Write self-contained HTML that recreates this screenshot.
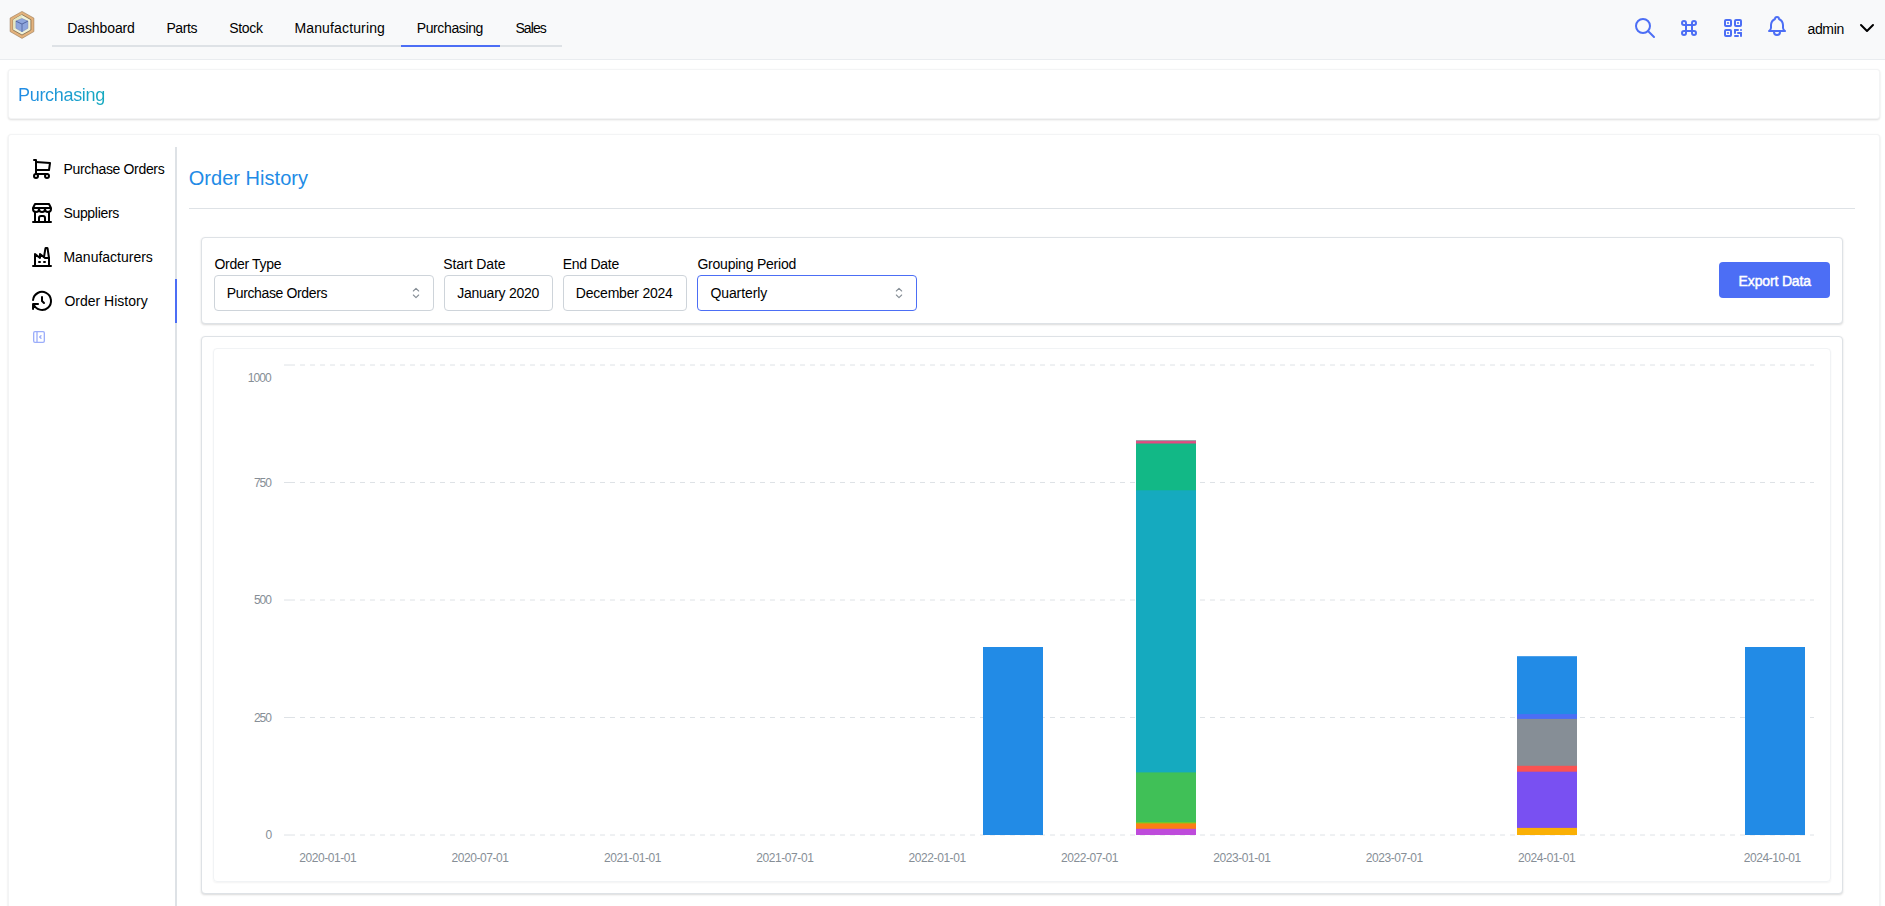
<!DOCTYPE html>
<html><head><meta charset="utf-8"><title>Purchasing</title>
<style>
*{box-sizing:border-box;margin:0;padding:0}
html,body{width:1885px;height:906px;overflow:hidden;background:#fff;font-family:"Liberation Sans",sans-serif;color:#000}
.a{position:absolute}
.t{position:absolute;line-height:1;white-space:nowrap}
svg.i{position:absolute;fill:none;stroke-linecap:round;stroke-linejoin:round}
.paper{position:absolute;background:#fff;border-radius:4px;box-shadow:0 1px 3px rgba(0,0,0,.05),0 1px 2px rgba(0,0,0,.1)}
.pp{position:absolute;background:#fff;border-radius:3px;border:1px solid #f3f4f5;box-shadow:0 1px 3px rgba(0,0,0,.05),0 1px 2px rgba(0,0,0,.09)}
.inp{position:absolute;border:1px solid #ced4da;border-radius:4px;background:#fff;height:36px;top:275px}
.yl{position:absolute;font-size:12px;line-height:1;color:#868e96;white-space:nowrap}
.xl{position:absolute;font-size:12px;line-height:1;color:#868e96;white-space:nowrap;top:852px;letter-spacing:-0.43px}
.bar{position:absolute;width:60px}
</style></head>
<body>
<div class="a" style="left:0;top:0;width:1885px;height:60px;background:#f8f9fa;border-bottom:1px solid #e9ecef"></div>
<svg class="a" style="left:6px;top:8px" width="32" height="34" viewBox="6 8 32 34">
  <polygon points="22,11.4 33.9,18.1 33.9,31.6 22,38.4 10.1,31.6 10.1,18.1" fill="#e3b27c" stroke="#8a6a44" stroke-width="0.5"/>
  <polygon points="22,14.6 30.9,19.7 30.9,30 22,35 13.1,30 13.1,19.7" fill="#f1f2d8" stroke="#6e5a3c" stroke-width="0.7"/>
  <polygon points="22,14.6 13.1,19.7 13.1,30 15.9,28.3 15.9,21.1 22,18.5" fill="#e4e7c4"/>
  <polygon points="22,18.5 27.9,21.1 27.9,28.3 22,31.8 15.9,28.3 15.9,21.1" fill="#8ea6dd" stroke="#6a7fb8" stroke-width="0.5"/>
  <polyline points="15.9,21.1 22,24.1 27.9,21.1" stroke="#4a5c98" stroke-width="0.9" fill="none"/>
  <line x1="22" y1="24.1" x2="22" y2="31.8" stroke="#5a6fa8" stroke-width="1"/>
</svg>
<div class="a" style="left:52px;top:45px;width:510px;height:2px;background:#dee2e6"></div>
<div class="a" style="left:401px;top:45px;width:99px;height:2px;background:#4c6ef5"></div>
<span class="t" style="left:67.3px;top:21px;font-size:14px;letter-spacing:-0.11px">Dashboard</span>
<span class="t" style="left:166.4px;top:21px;font-size:14px;letter-spacing:-0.4px">Parts</span>
<span class="t" style="left:229.2px;top:21px;font-size:14px;letter-spacing:-0.33px">Stock</span>
<span class="t" style="left:294.4px;top:21px;font-size:14px;letter-spacing:0.15px">Manufacturing</span>
<span class="t" style="left:416.7px;top:21px;font-size:14px;letter-spacing:-0.37px">Purchasing</span>
<span class="t" style="left:515.4px;top:21px;font-size:14px;letter-spacing:-0.9px">Sales</span>
<svg class="i" style="left:1633px;top:16px" width="24" height="24" viewBox="0 0 24 24" stroke="#4c6ef5" stroke-width="2"><path d="M10 10m-7 0a7 7 0 1 0 14 0a7 7 0 1 0 -14 0"/><path d="M21 21l-6 -6"/></svg>
<svg class="i" style="left:1677px;top:16px" width="24" height="24" viewBox="0 0 24 24" stroke="#4c6ef5" stroke-width="2"><path d="M7 9a2 2 0 1 1 2 -2v10a2 2 0 1 1 -2 -2h10a2 2 0 1 1 -2 2v-10a2 2 0 1 1 2 2h-10"/></svg>
<svg class="i" style="left:1721px;top:16px" width="24" height="24" viewBox="0 0 24 24" stroke="#4c6ef5" stroke-width="2"><path d="M4 4m0 1a1 1 0 0 1 1 -1h4a1 1 0 0 1 1 1v4a1 1 0 0 1 -1 1h-4a1 1 0 0 1 -1 -1z"/><path d="M7 17l0 .01"/><path d="M14 4m0 1a1 1 0 0 1 1 -1h4a1 1 0 0 1 1 1v4a1 1 0 0 1 -1 1h-4a1 1 0 0 1 -1 -1z"/><path d="M7 7l0 .01"/><path d="M4 14m0 1a1 1 0 0 1 1 -1h4a1 1 0 0 1 1 1v4a1 1 0 0 1 -1 1h-4a1 1 0 0 1 -1 -1z"/><path d="M17 7l0 .01"/><path d="M14 14l3 0"/><path d="M20 14l0 .01"/><path d="M14 14l0 3"/><path d="M14 20l3 0"/><path d="M17 17l3 0"/><path d="M20 17l0 3"/></svg>
<svg class="i" style="left:1765px;top:14px" width="24" height="24" viewBox="0 0 24 24" stroke="#4c6ef5" stroke-width="2"><path d="M10 5a2 2 0 1 1 4 0a7 7 0 0 1 4 6v3a4 4 0 0 0 2 3h-16a4 4 0 0 0 2 -3v-3a7 7 0 0 1 4 -6"/><path d="M9 17v1a3 3 0 0 0 6 0v-1"/></svg>
<span class="t" style="left:1807.4px;top:22px;font-size:14px;letter-spacing:-0.3px">admin</span>
<svg class="i" style="left:1855px;top:16px" width="24" height="24" viewBox="0 0 24 24" stroke="#000" stroke-width="2"><path d="M6 9l6 6l6 -6"/></svg>
<div class="pp" style="left:8px;top:69px;width:1872px;height:50px"></div>
<span class="t" style="left:18px;top:86px;font-size:18px;letter-spacing:-0.31px;background:linear-gradient(90deg,#228be6,#15aabf);-webkit-background-clip:text;background-clip:text;color:transparent;padding-bottom:4px">Purchasing</span>
<div class="pp" style="left:8px;top:134px;width:1872px;height:800px"></div>
<div class="a" style="left:175px;top:147px;width:2px;height:760px;background:#dee2e6"></div>
<div class="a" style="left:175px;top:279px;width:2px;height:44px;background:#4c6ef5"></div>
<svg class="i" style="left:30px;top:157px" width="24" height="24" viewBox="0 0 24 24" stroke="#000" stroke-width="2"><path d="M6 19m-2 0a2 2 0 1 0 4 0a2 2 0 1 0 -4 0"/><path d="M17 19m-2 0a2 2 0 1 0 4 0a2 2 0 1 0 -4 0"/><path d="M17 17h-11v-14h-2"/><path d="M6 5l14 1l-1 7h-13"/></svg>
<span class="t" style="left:63.6px;top:162px;font-size:14px;letter-spacing:-0.34px">Purchase Orders</span>
<svg class="i" style="left:30px;top:201px" width="24" height="24" viewBox="0 0 24 24" stroke="#000" stroke-width="2"><path d="M3 21l18 0"/><path d="M3 7v1a3 3 0 0 0 6 0v-1m0 1a3 3 0 0 0 6 0v-1m0 1a3 3 0 0 0 6 0v-1h-18l2 -4h14l2 4"/><path d="M5 21l0 -10.15"/><path d="M19 21l0 -10.15"/><path d="M9 21v-4a2 2 0 0 1 2 -2h2a2 2 0 0 1 2 2v4"/></svg>
<span class="t" style="left:63.4px;top:206px;font-size:14px;letter-spacing:-0.31px">Suppliers</span>
<svg class="i" style="left:30px;top:245px" width="24" height="24" viewBox="0 0 24 24" stroke="#000" stroke-width="2"><path d="M3 21h18"/><path d="M5 21v-12l5 4v-4l5 4h4"/><path d="M19 21v-8l-1.436 -9.574a.5 .5 0 0 0 -.495 -.426h-1.145a.5 .5 0 0 0 -.494 .418l-1.43 8.582"/><path d="M9 17h1"/><path d="M14 17h1"/></svg>
<span class="t" style="left:63.4px;top:250px;font-size:14px">Manufacturers</span>
<svg class="i" style="left:30px;top:289px" width="24" height="24" viewBox="0 0 24 24" stroke="#000" stroke-width="2"><path d="M12 8l0 4l2 2"/><path d="M3.05 11a9 9 0 1 1 .5 4m-.5 5v-5h5"/></svg>
<span class="t" style="left:64.4px;top:294px;font-size:14px">Order History</span>
<svg class="i" style="left:31px;top:329px" width="16" height="16" viewBox="0 0 24 24" stroke="#9caefa" stroke-width="2"><path d="M4 4m0 2a2 2 0 0 1 2 -2h12a2 2 0 0 1 2 2v12a2 2 0 0 1 -2 2h-12a2 2 0 0 1 -2 -2z"/><path d="M9 4v16"/><path d="M15 10l-2 2l2 2"/></svg>
<span class="t" style="left:188.7px;top:167.5px;font-size:20px;letter-spacing:0.04px;color:#228be6">Order History</span>
<div class="a" style="left:189px;top:208px;width:1666px;height:1px;background:#dee2e6"></div>
<div class="paper" style="left:201px;top:237px;width:1642px;height:87px;border:1px solid #dee2e6"></div>
<span class="t" style="left:214.5px;top:257px;font-size:14px;letter-spacing:-0.31px">Order Type</span>
<span class="t" style="left:443.3px;top:257px;font-size:14px;letter-spacing:-0.08px">Start Date</span>
<span class="t" style="left:562.7px;top:257px;font-size:14px;letter-spacing:-0.27px">End Date</span>
<span class="t" style="left:697.4px;top:257px;font-size:14px;letter-spacing:-0.22px">Grouping Period</span>
<div class="inp" style="left:214px;width:220px"></div>
<div class="inp" style="left:444px;width:109px"></div>
<div class="inp" style="left:563px;width:124px"></div>
<div class="inp" style="left:697px;width:220px;border-color:#4c6ef5"></div>
<span class="t" style="left:226.8px;top:286px;font-size:14px;letter-spacing:-0.37px">Purchase Orders</span>
<span class="t" style="left:457.2px;top:286px;font-size:14px;letter-spacing:-0.24px">January 2020</span>
<span class="t" style="left:575.8px;top:286px;font-size:14px;letter-spacing:-0.21px">December 2024</span>
<span class="t" style="left:710.4px;top:286px;font-size:14px;letter-spacing:-0.09px">Quarterly</span>
<svg class="i" style="left:408px;top:285px" width="16" height="16" viewBox="0 0 24 24" stroke="#868e96" stroke-width="1.6"><path d="M8 9l4 -4l4 4"/><path d="M16 15l-4 4l-4 -4"/></svg>
<svg class="i" style="left:891px;top:285px" width="16" height="16" viewBox="0 0 24 24" stroke="#868e96" stroke-width="1.6"><path d="M8 9l4 -4l4 4"/><path d="M16 15l-4 4l-4 -4"/></svg>
<div class="a" style="left:1719px;top:262px;width:111px;height:36px;background:#4c6ef5;border-radius:4px"></div>
<span class="t" style="left:1738.6px;top:274px;font-size:14px;letter-spacing:-0.15px;color:#fff;-webkit-text-stroke:0.45px #fff">Export Data</span>
<div class="paper" style="left:201px;top:336px;width:1642px;height:558px;border:1px solid #dee2e6"></div>
<div class="a" style="left:213px;top:348px;width:1618px;height:534px;border:1px solid #f1f3f5;border-radius:4px;box-shadow:0 1px 2px rgba(0,0,0,.05)"></div>
<svg class="a" style="left:0;top:0" width="1885" height="906"><line x1="284" y1="365" x2="290" y2="365" stroke="#dee2e6" stroke-width="1"/><line x1="290" y1="365" x2="1814" y2="365" stroke="#dee2e6" stroke-width="1" stroke-dasharray="5 5"/><line x1="284" y1="482.5" x2="290" y2="482.5" stroke="#dee2e6" stroke-width="1"/><line x1="290" y1="482.5" x2="1814" y2="482.5" stroke="#dee2e6" stroke-width="1" stroke-dasharray="5 5"/><line x1="284" y1="600" x2="290" y2="600" stroke="#dee2e6" stroke-width="1"/><line x1="290" y1="600" x2="1814" y2="600" stroke="#dee2e6" stroke-width="1" stroke-dasharray="5 5"/><line x1="284" y1="717.5" x2="290" y2="717.5" stroke="#dee2e6" stroke-width="1"/><line x1="290" y1="717.5" x2="1814" y2="717.5" stroke="#dee2e6" stroke-width="1" stroke-dasharray="5 5"/><line x1="284" y1="835" x2="290" y2="835" stroke="#dee2e6" stroke-width="1"/><line x1="290" y1="835" x2="1814" y2="835" stroke="#dee2e6" stroke-width="1" stroke-dasharray="5 5"/></svg>
<span class="yl" style="left:247.8px;top:372px;letter-spacing:-0.9px">1000</span>
<span class="yl" style="left:254px;top:477px;letter-spacing:-1.1px">750</span>
<span class="yl" style="left:254px;top:594px;letter-spacing:-1.1px">500</span>
<span class="yl" style="left:254px;top:712px;letter-spacing:-1.1px">250</span>
<span class="yl" style="left:265.5px;top:828.5px">0</span>
<span class="xl" style="left:299.2px">2020-01-01</span>
<span class="xl" style="left:451.5px">2020-07-01</span>
<span class="xl" style="left:603.9px">2021-01-01</span>
<span class="xl" style="left:756.3px">2021-07-01</span>
<span class="xl" style="left:908.6px">2022-01-01</span>
<span class="xl" style="left:1061.0px">2022-07-01</span>
<span class="xl" style="left:1213.3px">2023-01-01</span>
<span class="xl" style="left:1365.7px">2023-07-01</span>
<span class="xl" style="left:1518.1px">2024-01-01</span>
<span class="xl" style="left:1743.7px">2024-10-01</span>
<div class="bar" style="left:983.4px;top:647px;height:188px;background:#228be6"></div>
<div class="bar" style="left:1745.4px;top:647px;height:188px;background:#228be6"></div>
<svg class="a" style="left:1136px;top:430px" width="60" height="410" viewBox="0 430 60 410"><rect x="0" y="440.2" width="60" height="394.80" fill="#868e96"/><rect x="0" y="441.2" width="60" height="393.80" fill="#e64980"/><rect x="0" y="443.5" width="60" height="391.50" fill="#12b886"/><rect x="0" y="490.3" width="60" height="344.70" fill="#15aabf"/><rect x="0" y="772.4" width="60" height="62.60" fill="#40c057"/><rect x="0" y="822.2" width="60" height="12.80" fill="#82c91e"/><rect x="0" y="823.4" width="60" height="11.60" fill="#fd7e14"/><rect x="0" y="828.8" width="60" height="6.20" fill="#be4bdb"/></svg>
<svg class="a" style="left:1517px;top:430px" width="60" height="410" viewBox="0 430 60 410"><rect x="0" y="656.2" width="60" height="178.80" fill="#228be6"/><rect x="0" y="714.1" width="60" height="120.90" fill="#4c6ef5"/><rect x="0" y="718.9" width="60" height="116.10" fill="#868e96"/><rect x="0" y="765.8" width="60" height="69.20" fill="#fa5252"/><rect x="0" y="771.7" width="60" height="63.30" fill="#7950f2"/><rect x="0" y="827.9" width="60" height="7.10" fill="#fab005"/></svg>
</body></html>
